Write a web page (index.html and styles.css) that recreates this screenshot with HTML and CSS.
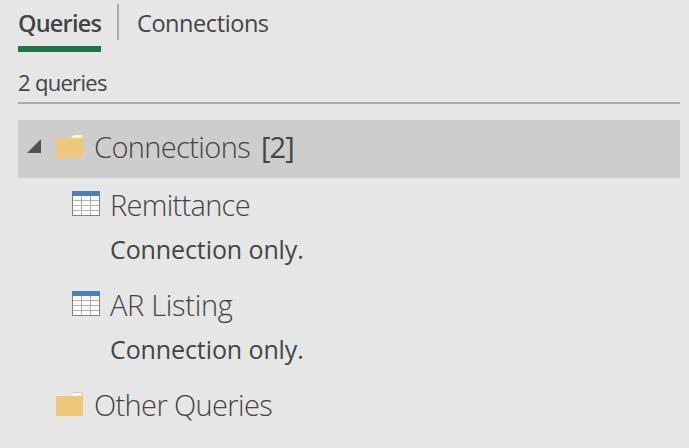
FILE: index.html
```html
<!DOCTYPE html>
<html lang="en">
<head>
<meta charset="utf-8">
<title>Queries &amp; Connections</title>
<link rel="stylesheet" href="styles.css">
</head>
<body>
<svg width="0" height="0" class="defs">
  <symbol id="folder" viewBox="0 0 28 24">
    <path fill="#eec77d" d="M0 4h14l4-4h8q1 0 1 1v23H0z"/>
    <path fill="#fff" d="M15 4l3-3h8v3z"/>
  </symbol>
  <symbol id="table" viewBox="0 0 28 25">
    <path fill="#808080" d="M0 4h28v21H0z"/>
    <path fill="#fff" d="M1 5h26v19H1z"/>
    <path fill="#b0b0b0" d="M1 9h26v1H1zM1 14h26v1H1zM1 19h26v1H1zM9 5h1v19H9zM18 5h1v19h-1z"/>
    <path fill="#4a80bb" d="M0 0h28v5H0z"/>
  </symbol>
</svg>
<nav class="tabs">
  <a class="tab active"><span class="t-queries">Queries</span></a>
  <span class="divider"></span>
  <a class="tab"><span class="t-conn">Connections</span></a>
</nav>
<div class="count"><span>2 queries</span></div>
<main class="tree">
  <div class="row group selected">
    <svg class="caret" viewBox="0 0 14 14"><path fill="#505050" d="M14 0v14H0z"/></svg>
    <svg class="folder"><use href="#folder"/></svg>
    <span class="name n-conn">Connections</span><span class="total">[2]</span>
  </div>
  <div class="item">
    <div class="row"><svg class="table"><use href="#table"/></svg><span class="name n-rem">Remittance</span></div>
    <div class="note"><span>Connection only.</span></div>
  </div>
  <div class="item">
    <div class="row"><svg class="table"><use href="#table"/></svg><span class="name n-ar">AR Listing</span></div>
    <div class="note"><span>Connection only.</span></div>
  </div>
  <div class="row group closed">
    <svg class="folder"><use href="#folder"/></svg>
    <span class="name n-other">Other Queries</span>
  </div>
</main>
</body>
</html>
```
FILE: styles.css
```css
* { box-sizing: border-box; }
body {
  margin: 0;
  padding: 4px 9px 0 18px;
  height: 448px;
  overflow: hidden;
  background: #e6e6e6;
  color: #444;
  font-family: "Open Sans", "Noto Sans", sans-serif;
  white-space: nowrap;
}
.defs { display: block; height: 0; }
.tabs { display: flex; height: 48px; font-size: 23.5px; line-height: 39px; }
.tab { height: 48px; letter-spacing: -0.42px; }
.active { width: 83px; font-weight: 600; letter-spacing: -0.8px; border-bottom: 6px solid #217346; }
.divider { width: 2px; height: 36px; margin: 0 18px 0 16px; background: #ababab; }
.count { height: 52px; padding-top: 15px; font-size: 22px; letter-spacing: -0.7px; line-height: 31px; border-bottom: 2px solid #ababab; }
.tree { padding-top: 16px; }
.row { display: flex; height: 58px; line-height: 54px; font-size: 29px; letter-spacing: -0.62px; }
.name { font-weight: 300; }
.n-rem { letter-spacing: -0.7px; }
.n-ar { letter-spacing: -0.3px; }
.group { padding-left: 38px; }
.selected { padding-left: 9px; background: #cdcdcd; }
.caret { width: 14px; height: 14px; margin: 19px 15px 0 0; }
.folder { width: 28px; height: 24px; margin: 14px 10px 0 0; }
.total { margin-left: 11px; letter-spacing: -0.9px; }
.item { height: 100px; padding-left: 54px; }
.table { width: 28px; height: 25px; margin: 13px 10px 0 0; }
.note { padding-left: 38px; font-size: 25px; letter-spacing: -0.1px; line-height: 27px; }
```
